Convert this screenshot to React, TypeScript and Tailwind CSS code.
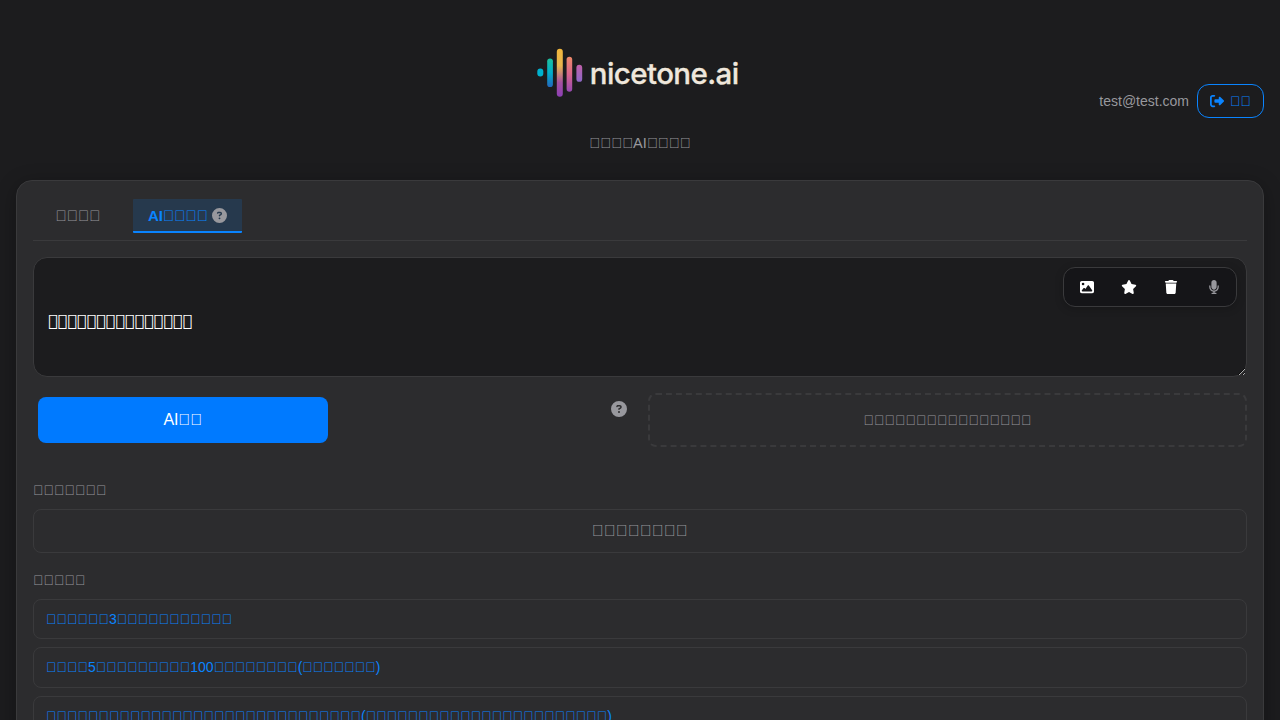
import React from 'react';
import {
  FaCircleQuestion,
  FaImage,
  FaMicrophone,
  FaRightFromBracket,
  FaStar,
  FaTrash,
} from 'react-icons/fa6';

// A code point without a glyph: the font's own "missing glyph" box is drawn.
const box = (count: number) => '\u{10FFFD}'.repeat(count);

const samples = [
  `${box(6)}3${box(11)}`,
  `${box(4)}5${box(9)}100${box(8)}(${box(7)})`,
  `${box(30)}(${box(23)})`,
];

function Logo() {
  return (
    <svg className="block h-[60px] w-[210px] overflow-visible" viewBox="0 0 210 60">
      <defs>
        <linearGradient id="b2" x1="0" y1="0" x2="0" y2="1">
          <stop offset="0" stopColor="#1fc09c" />
          <stop offset="0.5" stopColor="#00aecb" />
          <stop offset="1" stopColor="#2468bd" />
        </linearGradient>
        <linearGradient id="b3" x1="0" y1="0" x2="0" y2="1">
          <stop offset="0" stopColor="#f2b73c" />
          <stop offset="0.35" stopColor="#e9b54e" />
          <stop offset="0.7" stopColor="#a6509f" />
          <stop offset="1" stopColor="#8c3fb5" />
        </linearGradient>
        <linearGradient id="b4" x1="0" y1="0" x2="0" y2="1">
          <stop offset="0" stopColor="#ee8a69" />
          <stop offset="0.5" stopColor="#d8648c" />
          <stop offset="1" stopColor="#9648b2" />
        </linearGradient>
        <linearGradient id="b5" x1="0" y1="0" x2="0" y2="1">
          <stop offset="0" stopColor="#c05fa8" />
          <stop offset="1" stopColor="#8d68c8" />
        </linearGradient>
      </defs>
      <rect x="2.3" y="26.6" width="6" height="8" rx="3" fill="#00b1cf" />
      <rect x="12.2" y="16.4" width="5.7" height="28.6" rx="2.85" fill="url(#b2)" />
      <rect x="21.8" y="6.8" width="6" height="48" rx="3" fill="url(#b3)" />
      <rect x="31.6" y="14.8" width="5.6" height="35" rx="2.8" fill="url(#b4)" />
      <rect x="41.4" y="22.8" width="5.8" height="17" rx="2.9" fill="url(#b5)" />
      <text
        x="54.8"
        y="41.6"
        fill="#efe7dc"
        stroke="#efe7dc"
        strokeWidth="0.3"
        fontFamily="Inter, sans-serif"
        fontSize="29.5"
        fontWeight="500"
        textLength="149.4"
        lengthAdjust="spacing"
      >
        nicetone.ai
      </text>
    </svg>
  );
}

export default function App() {
  return (
    <div className="h-[720px] overflow-hidden bg-[#1c1c1e] px-4 font-['Liberation_Sans',sans-serif] text-[#98989d]">
      <header className="grid h-[180px] grid-cols-[1fr_auto_1fr] items-center">
        <div />
        <div className="flex h-full flex-col items-center pt-[42px]">
          <Logo />
          <p className="mt-[30px] text-[14.6px] leading-[22px]">{box(4)}AI{box(4)}</p>
        </div>
        <div className="flex items-center justify-end gap-2 pt-[22px] text-[14px]">
          <span>test@test.com</span>
          <button className="flex h-[34px] w-[67px] items-center justify-center gap-[6px] rounded-[12px] border border-[#0a84ff] text-[#0a84ff]">
            <FaRightFromBracket className="size-[14px]" />
            <span>{box(2)}</span>
          </button>
        </div>
      </header>

      <main className="h-[800px] rounded-[16px] border border-[#3a3a3c] bg-[#2c2c2e] px-4 pt-[18px] shadow-[0_4px_20px_rgba(0,0,0,0.3)]">
        <nav className="flex h-[42px] items-start gap-[18px] border-b border-[#3a3a3c] text-[15px]">
          <button className="h-[34px] w-[82px] pl-2">{box(4)}</button>
          <button className="flex h-[34px] items-center gap-1 rounded-[1px] border-b-2 border-[#0a84ff] bg-[#0a84ff]/15 px-[15px] font-bold text-[#0a84ff]">
            <span className="pt-[2px]">AI{box(4)}</span>
            <FaCircleQuestion className="size-[15px] text-[#98989d]" />
          </button>
        </nav>

        <div className="relative mt-4 h-[120px]">
          <textarea
            className="block h-[120px] w-full resize rounded-[14px] border border-[#3a3a3c] bg-[#1c1c1e] px-[14px] pt-[52px] font-['DejaVu_Sans',sans-serif] text-[16px] leading-[22px] text-white outline-none"
            defaultValue={box(15)}
          />
          <div className="absolute top-[10px] right-[10px] flex h-10 w-[174px] items-center justify-around rounded-[12px] border border-[#3a3a3c] bg-[#151518] px-[2px] text-white shadow-[0_2px_8px_rgba(0,0,0,0.2)]">
            <span className="flex w-[42px] justify-center"><FaImage className="size-[14px]" /></span>
            <span className="flex w-[42px] justify-center"><FaStar className="h-[14px] w-4" /></span>
            <span className="flex w-[42px] justify-center"><FaTrash className="size-[14px]" /></span>
            <span className="flex w-[42px] justify-center pl-px"><FaMicrophone className="size-[14px] text-[#98989d]" /></span>
          </div>
        </div>

        <div className="mt-4 flex h-[54px]">
          <button className="mt-1 ml-[5px] h-[46px] w-[290px] rounded-[8px] bg-[#007aff] text-[16px] text-white">
            AI{box(2)}
          </button>
          <FaCircleQuestion className="mt-2 ml-auto size-4" />
          <div className="ml-[21px] flex w-[599px] items-center justify-center rounded-[8px] border-2 border-dashed border-[#3a3a3c] text-[14px]">
            {box(16)}
          </div>
        </div>

        <h3 className="mt-[33px] text-[14px] leading-5">{box(7)}</h3>
        <div className="mt-[9px] flex h-11 items-center justify-center rounded-[8px] border border-[#3a3a3c] text-[16px]">
          {box(8)}
        </div>
        <h3 className="mt-[17px] text-[14px] leading-5">{box(5)}</h3>
        <ul className="mt-[9px] flex flex-col gap-2 text-[14px] text-[#0a84ff]">
          {samples.map((sample) => (
            <li key={sample} className="flex h-[40.4px] items-center rounded-[8px] border border-[#3a3a3c] px-3 pt-[0.4px]">
              {sample}
            </li>
          ))}
        </ul>
      </main>
    </div>
  );
}
